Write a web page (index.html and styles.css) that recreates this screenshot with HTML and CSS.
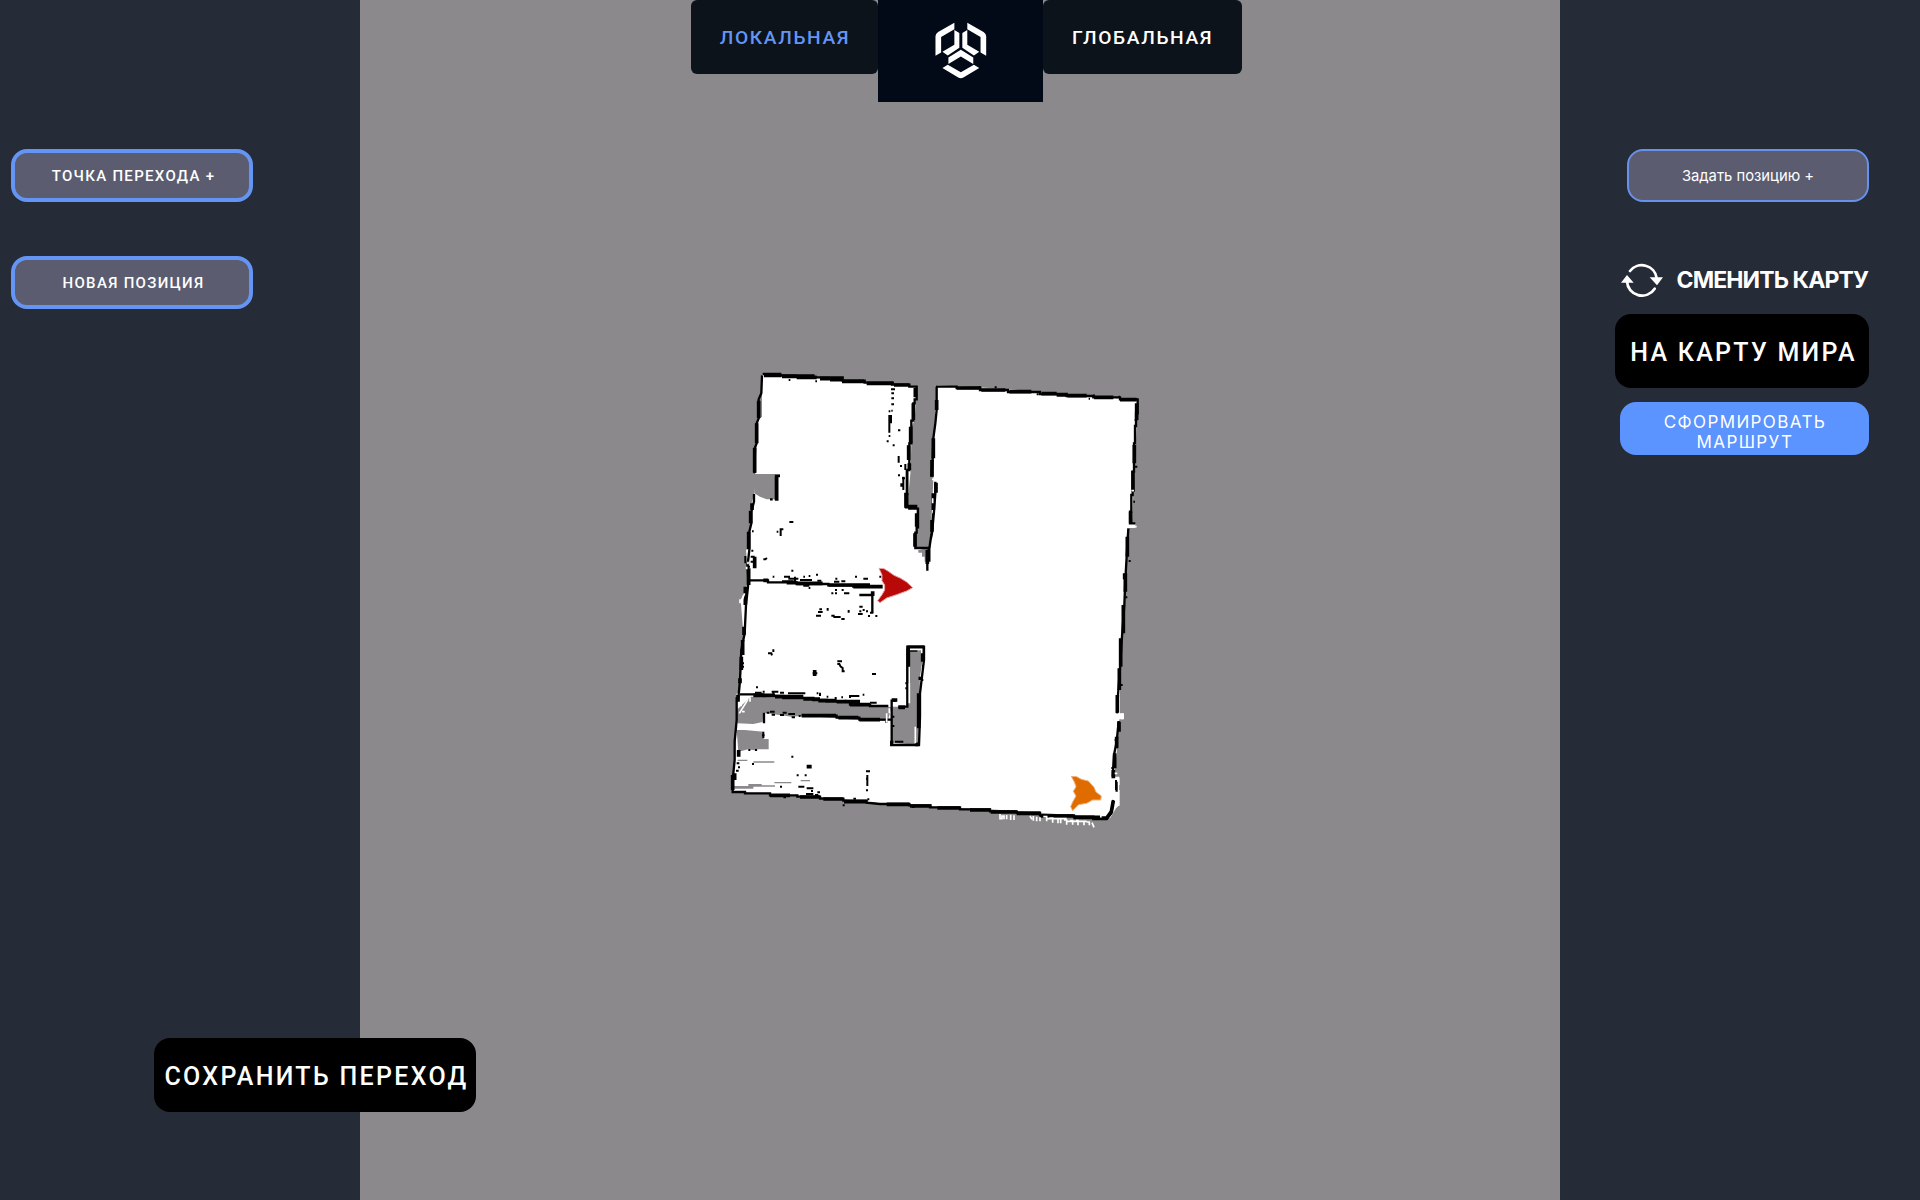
FILE: index.html
```html
<!DOCTYPE html>
<html lang="ru">
<head>
<meta charset="utf-8">
<title>Карта</title>
<link rel="stylesheet" href="styles.css">
</head>
<body>
<div class="layout">
  <aside class="side side-left">
    <button class="btn outline thick">ТОЧКА ПЕРЕХОДА +</button>
    <button class="btn outline thick position">НОВАЯ ПОЗИЦИЯ</button>
  </aside>
  <main class="map">
    <svg class="plan" viewBox="1080 0 3600 3600">
      <g transform="translate(2160 1080)">
        <path class="floor" d="M126 44L320 56 590 80 584 180 575 200 572 330 562 440 590 448 588 565 612 570 622 628 628 565 635 470 640 360 642 230 650 76 850 86 1050 103 1252 120 1246 300 1240 400 1236 490 1246 492V504H1226L1220 600 1208 830 1200 960V1060H1212V1078H1198L1190 1180 1182 1250H1198V1335L1188 1345 1170 1375 1120 1370 960 1358 810 1348 660 1341 480 1330 300 1310 150 1302 38 1295 46 1160 50 1000 60 1000 70 820 62 720 76 690 85 660 78 570 90 560 90 450 103 400 105 340 115 180 126 170Z"/>
        <path class="void" d="M100 342H180V350H168V418H140L120 410 103 400ZM50 1050L92 1010 250 1017 420 1030 515 1042 503 1083 420 1080 250 1067 215 1070 130 1058 128 1086 100 1092 52 1090ZM560 870H612L600 950 597 1070 595 1155 515 1148V1040H560ZM50 1110H75L130 1115V1137H146V1168H112V1172L85 1168 55 1175ZM53 1199H82V1203H53ZM100 1204H163V1208H100ZM42 1278H85V1272H125V1276H165V1280H100V1286H42ZM163 1266H214V1270H163ZM242 1260H270V1264H242ZM595 570H620V605H614V590H606V578H595Z"/>
        <path class="line" d="M128 42H180V46H280V52H368V62H434V68H516V74H568V80H590V118H584V130H580V182H574V250H568V330H562V402H556V440H568V446H594V502H590V518H586V564H628L622 580V632 M640 460L634 525 628 565V605 M648 80H710V84H780V90H864V96H960V102H1040V108H1120V112H1200V118H1253V160H1248V198H1245V250H1242V335H1238V405H1234V455H1230V490H1246 M650 80V150L646 190 640 235 638 300 634 350M646 365V400L642 455 636 520 630 548 M1225 505L1220 590 1216 660 1213 735 1206 830 1200 925 1194 1005 1191 1060M1196 1083L1190 1145 1182 1185 1178 1250M1190 1265V1295M1180 1320L1174 1360 1160 1377H1120V1370H1062V1366H960V1358H890V1354H810V1348H720V1342H630V1336H568V1332H480L440 1328V1322H370V1316H300V1310H232V1306H150V1300H75V1296H38V1260L44 1200V1145L50 1080V1015H55L60 960 64 870 74 820 78 735 84 680V650L82 610M88 661H144V667H230V672H325V676H400V680H480 M126 46L124 100 116 118V175L110 190V250L104 265V340M102 402V425L94 455V490L88 515V570L84 605V630 M150 418H158M168 420V348H180 M60 1003H130V1008H190V1014H280V1020H320V1024H390V1034H450V1038H505M132 1058V1090M245 1067H350V1073H418V1079H515 M515 1148V1022H530M535 1040H562V860H612V900L606 950 600 1000V1070L597 1155H510M564 872H592M457 705V758M418 705H458"/>
        <path class="bold" d="M132 46H185M186 49H230M230 52H290M300 56H330M330 59H368M366 64H432M440 70H520M522 75H568M116 122V174M110 190V250M104 264V338M170 350V422M92 452V490M86 515V568M96 430V450M104 590V625M586 84V112M580 130V180M572 200V250M566 256V300M568 310V330M560 400V440H592M590 460V500M585 520V560M622 570V612M710 84H784M784 90H856M868 95H934M964 101H1010M1010 105H1042M1042 107H1100M1122 112H1180M1200 119H1250M650 120V150M640 235V295M636 300V350M648 368V398M640 400V450M636 480V515M1250 130V180M1243 255V310M1239 332V395M1232 455V490M1222 530V590M1214 640V658M1216 640V695M1210 735V820M1202 835V920M1198 925V990M1192 1005V1058M1197 1085V1115M1190 1130V1165M1184 1180V1225M1180 1230V1255M1180 1322L1174 1355 1160 1374H1145M1140 1372H1060M1060 1368H960M960 1360H890M890 1356H812M812 1350H750M720 1344H652M635 1338H570M568 1333H500M440 1325H372M370 1317H310M300 1311H240M210 1306H150M44 1240V1260M56 1170V1190M38 1245V1290M76 735V680M72 800V825M68 840V885M64 890V930M60 955V970M54 1005V1025M86 625V675M130 661H145M200 668H230M230 670H308M325 675H450M400 680H488M458 694V708M100 1006H165M165 1010H250M250 1017H300M295 1022H350M350 1025H420M390 1034H450M245 1067H348M355 1073H415M418 1079H480M515 1020H532M565 865V970M562 862H612M608 862V905M601 950V960M596 1000V1105M510 1148H520M585 1153H595M284 930V948M260 1220H275M535 1042H555"/>
        <path class="dots" d="M513 88h12M514 100h8M514 115h8M514 133h8M506 154h5M514 152h4M513 165V190M508 165V218M506 228h5M534 211h7M500 244h6M518 256h6M536 288V308M540 318h6M534 346h6M556 312V330M550 350V390M544 370V380M560 330V400M555 355H546M208 486h12M170 515h5M182 528V508h8M96 514h5M76 588V610M92 590h12M92 605h12M82 620h8M94 572h6M130 598h6l5 -4M214 632h6M288 644h6M266 648h5M250 650h5M405 650h6M430 656h14M478 650h6M158 650h5M192 650h18M205 656h30M225 650V664M186 664h35M240 660h36M292 662h12M346 656h6M342 665h16M364 664h12M250 677h18M266 684h5M334 700h6M345 690h6M365 690h6M372 700h16M345 700h6M323 744V752M386 750V758M298 748h8M294 756h14M288 767h15M334 767h10M340 771h22M364 777h10M418 740h10M428 750h6M414 762h14M418 754h6M438 754h6M450 758h10M444 768h6M466 768h6M160 868V876M144 880h10l2 6M352 904h14M352 912h6l4 8l6 4v10h6M278 940h14M456 942h12M108 982h6M105 998h20M128 995h6M155 995h20M160 1004V998M180 998h12M204 1000H256M290 1000h5M300 1008V998M320 1010h5M344 1014h6M364 1012h5M390 1014V1008H418M428 1004h5M374 1022h5M450 1028h20M140 1058h8M155 1064h10M180 1065h12M205 1062h20M236 1068h6M150 1055h14M188 1058h12M215 1072h10M496 1086h6M130 1115V1135M126 1126h8M85 1170h6M105 1170h6M214 1190h6M96 1212h6M50 1210h8M54 1222h6M48 1232h8M230 1246h6M254 1246h6M180 1280h6M235 1280h18M260 1285h20M276 1290V1296M258 1302h22M285 1305h10M292 1297h8M438 1234h12M442 1245V1278M438 1256h4M438 1291h6M368 1336h6M400 1316h8M442 1318h6M190 1312h8M576 1341h8M62 910h10M66 920h6M515 1070h8M515 1098h8M525 1145h25M556 970h5M556 985h5M606 918h6M604 960h6M206 60h5M286 64h5M514 68h8M824 82h6M776 82h4M950 103h6M1106 116h4M1120 106h4M1196 110h4M1244 180h8M1244 320h8M1240 425h5M1226 603h6M1200 975h8M1216 712h6M1174 1224h6M1184 1140h6M1188 1260V1290M1196 1275V1290"/>
        <path class="scan" d="M840 1362V1376h6V1368h6v10M860 1365V1378M872 1364V1380M882 1366V1380M930 1368l6 10M940 1368v14M950 1370v14M960 1372v12M970 1370h10v14M988 1374h10v14M1006 1376h8v14M1022 1376v14M1032 1380h8v14M1050 1382h8v12M1068 1382h6v14M1084 1384h8v12M1100 1386h8v10M1116 1388l6 14M980 1376h60M1040 1384h60M1196 1255V1338M1184 1240h8M1206 1060V1078M1196 1068h16M74 700L64 725M60 718V730M58 1060L84 1018M66 1055h8M90 1012V1025M500 1060V1088M508 1045V1060M586 1100V1150M568 920V1030M570 868H605V880M1240 500h10M1234 392h8M636 358h6M638 415V430M60 1036h6M84 605v8M80 620v8"/>
        <path class="arrow red" d="M477 625L492 626 505 634 522 646 542 655 560 666 578 683 560 693 530 704 500 714 480 728 473 722 486 704 494 690V675L486 662V645Z"/>
        <path class="arrow orange" d="M1054 1249L1070 1250 1084 1258 1105 1263 1122 1282 1128 1296 1144 1308 1142 1320H1118L1100 1330 1076 1334 1058 1352 1052 1340 1058 1326 1068 1308 1060 1294 1068 1280 1064 1268Z"/>
      </g>
    </svg>
    <nav class="tabs">
      <a class="tab active">ЛОКАЛЬНАЯ</a>
      <div class="logo">
        <svg viewBox="44 36 156 172">
          <path d="M102 38L53 66Q45 71 45 79V138L62 128V81L102 58ZM102 60L117 69V114L82 137 66 126 102 105ZM141 38L190 66Q198 71 198 79V138L181 128V81L141 58ZM141 60L126 69V114L161 137 177 126 141 105ZM121.500 120L159 143V163L121.500 140 84 163V143ZM82 165L121.500 188 161 165 177 175 128 204Q121.500 207 115 204L66 175Z"/>
        </svg>
      </div>
      <a class="tab global">ГЛОБАЛЬНАЯ</a>
    </nav>
  </main>
  <aside class="side side-right">
    <button class="btn outline set">Задать позицию +</button>
    <div class="change">
      <svg class="swap" viewBox="0 0 126 102">
        <path class="ring" d="M27 24A45 45 0 0 1 107 45M101 77A45 45 0 0 1 18 55"/>
        <path d="M86 43H126L108 67ZM0 59H38L18 36Z"/>
      </svg>
      <span>СМЕНИТЬ КАРТУ</span>
    </div>
    <button class="btn black world">НА КАРТУ МИРА</button>
    <button class="btn route">СФОРМИРОВАТЬ<br>МАРШРУТ</button>
  </aside>
</div>
<button class="btn black save">СОХРАНИТЬ ПЕРЕХОД</button>
</body>
</html>
```
FILE: styles.css
```css
* { box-sizing: border-box; }
body { margin: 0; background: #252b37; overflow: hidden; }
.layout { display: grid; grid-template-columns: 360px 1200px 360px; height: 1200px; }
.side { display: flex; flex-direction: column; background: #252b37; padding-top: 149px; }
.side-left { padding-left: 11px; align-items: flex-start; }
.side-right { padding-right: 51px; align-items: flex-end; }
.map { position: relative; background: #8c898c; }
.plan { display: block; width: 1200px; height: 1200px; }

.btn { display: flex; align-items: center; justify-content: center; margin: 0; padding: 0; border: 0; border-radius: 16px; color: #fff; font-family: Roboto, sans-serif; font-weight: 500; white-space: nowrap; }
.outline { width: 242px; height: 53px; background: #5b5c6f; border: 2px solid #6791ea; }
.thick { border: 4px solid #6495f4; padding-left: 3px; font-size: 15px; letter-spacing: 1.3px; }
.position { margin-top: 54px; }
.set { font: 400 14.8px Inter, sans-serif; }
.black { height: 74px; background: #000; font-size: 25px; letter-spacing: 2.3px; padding: 3px 0 0 3px; }
.world { width: 254px; margin-top: 18px; }
.route { width: 249px; height: 53px; margin-top: 14px; padding: 7px 0 0 1px; background: #5b93ff; font: 400 17px/20px Inter, sans-serif; letter-spacing: 1.4px; text-align: center; }
.save { position: absolute; left: 154px; top: 1038px; width: 322px; }

.change { display: flex; align-items: center; gap: 14px; height: 34px; margin-top: 60px; padding-right: 1px; color: #fff; font: 700 23px/34px Inter, sans-serif; letter-spacing: -0.9px; white-space: nowrap; }
.change span { padding-top: 2px; }
.swap { width: 42px; height: 34px; margin-top: 1px; fill: #fff; }
.ring { fill: none; stroke: #fff; stroke-width: 8; stroke-linecap: round; }

.tabs { position: absolute; top: 0; left: 331px; display: flex; align-items: flex-start; }
.tab { display: flex; align-items: center; justify-content: center; width: 187px; height: 74px; padding-left: 1px; background: #0c131a; border-radius: 6px; color: #fff; font: 500 19.2px Roboto, sans-serif; letter-spacing: 1.6px; }
.active { color: #6495f4; }
.global { width: 199px; padding-left: 0; }
.logo { display: flex; justify-content: center; width: 165px; height: 102px; padding-top: 22px; background: #030a17; }
.logo svg { width: 52px; height: 57px; fill: #fff; }

.floor { fill: #fff; }
.void { fill: #8c898c; }
.line, .bold, .dots, .scan { fill: none; stroke: #000; }
.line { stroke-width: 7; }
.bold { stroke-width: 11; }
.dots { stroke-width: 6; }
.scan { stroke: #fff; stroke-width: 5; }
.red { fill: #b90808; stroke: #e9a0a0; stroke-width: 3; }
.orange { fill: #e06c00; stroke: #efb27c; stroke-width: 3; }
```
